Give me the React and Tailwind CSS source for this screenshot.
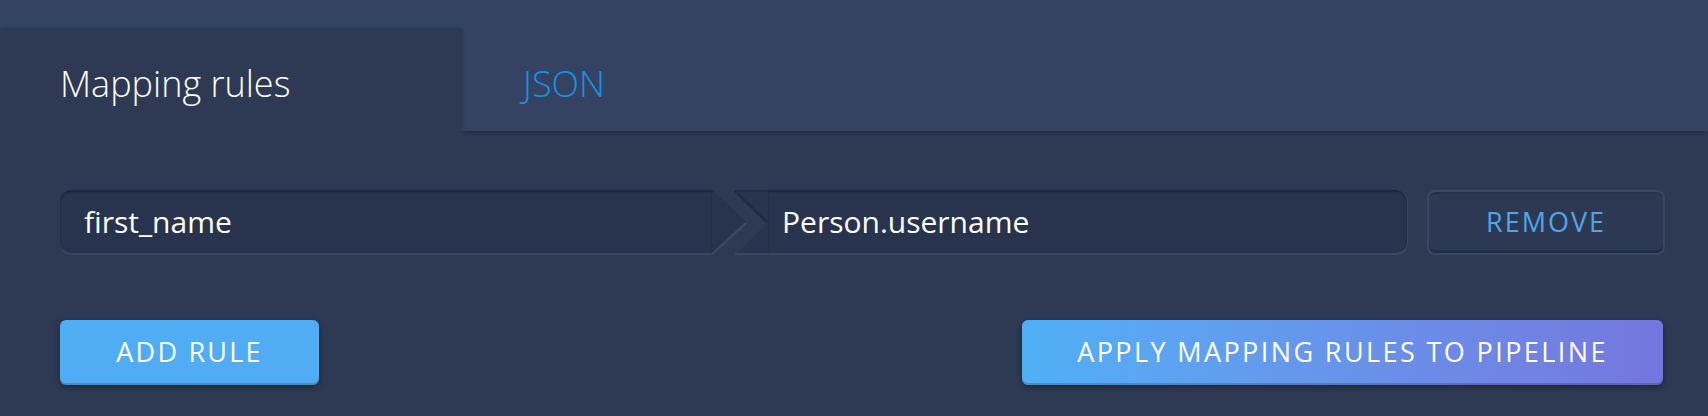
import React from "react";

const ChevronJoint = () => (
  <svg width="56" height="65" viewBox="0 0 56 65" className="shrink-0 block">
    <polygon points="0,0 35,32.5 0,65" fill="#28344e" />
    <polygon points="23,0 56,0 56,65 23,65 56,32.5" fill="#28344e" />
    <rect x="0" y="0" width="2" height="2" fill="#222c43" />
    <rect x="23" y="0" width="33" height="2" fill="#222c43" />
    <path d="M23 1 L55 32.5" stroke="#1f283d" strokeWidth="2" />
    <path d="M0 64 L34.5 32.5" stroke="#3d4a66" strokeWidth="2" />
    <path d="M56 33 L24 64" stroke="#2b374f" strokeWidth="1.5" />
    <rect x="23" y="63" width="33" height="2" fill="#3b4865" />
  </svg>
);

const App = () => {
  return (
    <div className="w-[1708px] h-[416px] overflow-hidden bg-[#2e3953] font-['Open_Sans',sans-serif]">
      {/* tabs */}
      <div className="flex h-[131px] bg-[#334361]">
        <div className="flex flex-col justify-end w-[462px] relative z-20">
          <div className="h-[103px] bg-[#2e3953] rounded-tr-[6px] shadow-[2px_-1px_3px_-1px_rgba(0,0,0,0.2)] flex items-center pl-[60px] pt-[8px] text-[36px] font-light text-white">
            Mapping rules
          </div>
        </div>
        <div className="flex-1 relative z-10 shadow-[0_4px_3px_-2px_rgba(0,0,0,0.25)] flex items-end">
          <div className="h-[103px] flex items-center pl-[61px] pt-[8px] text-[36px] font-light text-[#1f8deb]">
            JSON
          </div>
        </div>
      </div>

      {/* rule row */}
      <div className="flex h-[65px] mt-[59px] pl-[60px] pr-[43px]">
        <div className="w-[652px] rounded-l-[12px] bg-[#28344e] border-b-2 border-[#3b4865] shadow-[inset_0_2px_2px_rgba(0,0,0,0.28)] flex items-center pl-[24px] text-[30px] text-white">
          first_name
        </div>
        <ChevronJoint />
        <div className="flex-1 rounded-r-[12px] bg-[#28344e] border-b-2 border-r border-[#3b4865] shadow-[inset_0_2px_2px_rgba(0,0,0,0.28)] flex items-center pl-[14px] text-[30px] text-white">
          Person.username
        </div>
        <button className="ml-[19px] w-[238px] rounded-[8px] bg-[#2d3954] border-2 border-[#3a4762] shadow-[inset_0_-3px_0_rgba(0,0,0,0.2),inset_0_2px_0_rgba(0,0,0,0.15)] flex items-center justify-center text-[27px] tracking-[2px] text-[#4ea7e9]">
          REMOVE
        </button>
      </div>

      {/* actions */}
      <div className="flex justify-between h-[65px] mt-[65px] pl-[60px] pr-[45px]">
        <button className="w-[259px] rounded-[6px] bg-[#50adf3] shadow-[inset_0_-2px_0_rgba(0,0,0,0.18),0_2px_6px_rgba(0,0,0,0.35)] flex items-center justify-center text-[27px] tracking-[2.2px] text-white">
          ADD RULE
        </button>
        <button className="w-[641px] rounded-[6px] bg-linear-to-r from-[#4fb0f6] to-[#7476dd] shadow-[inset_0_-2px_0_rgba(0,0,0,0.18),0_2px_6px_rgba(0,0,0,0.35)] flex items-center justify-center text-[27px] tracking-[2.4px] text-white">
          APPLY MAPPING RULES TO PIPELINE
        </button>
      </div>
    </div>
  );
};

export default App;
